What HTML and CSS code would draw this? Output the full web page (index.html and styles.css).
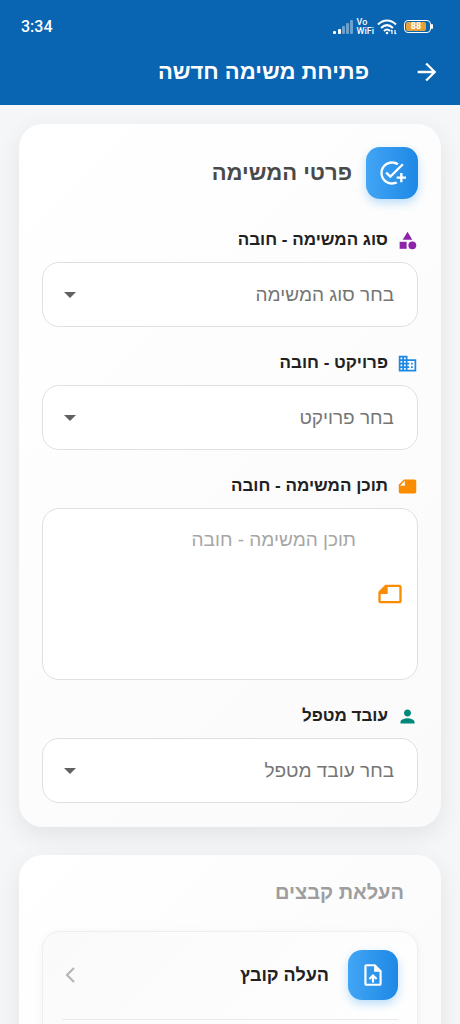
FILE: index.html
```html
<!DOCTYPE html>
<html lang="he" dir="rtl">
<head>
<meta charset="utf-8">
<meta name="viewport" content="width=device-width, initial-scale=1">
<title>פתיחת משימה חדשה</title>
<link rel="stylesheet" href="styles.css">
</head>
<body>
<div class="screen">
  <header class="header">
    <div class="status" dir="ltr">
      <span class="clock">3:34</span>
      <div class="status-icons">
        <svg width="21" height="14" viewBox="0 0 21 14" fill="#fff" aria-hidden="true">
          <rect x="0" y="11" width="3" height="3" rx="1"/>
          <rect x="5" y="9" width="3" height="5" rx="1"/>
          <g opacity=".4"><rect x="9" y="6" width="3" height="8" rx="1"/><rect x="13" y="3" width="3" height="11" rx="1"/><rect x="17" y="0" width="3" height="14" rx="1"/></g>
        </svg>
        <span class="vowifi"><span>Vo</span><span>WiFi</span></span>
        <svg width="21" height="16" viewBox="0 0 21 16" fill="none" stroke="#fff" stroke-width="2" aria-hidden="true">
          <path d="M1 5.500C6.500.200 13.500.200 19 5.500M4 9C7.800 5.300 12.200 5.300 16 9M7 12C9 10 11 10 13 12"/>
          <circle cx="10" cy="14" r="1.300" fill="#fff" stroke="none"/>
          <path d="M15 11v4M13.800 12.200L15 11M18 11v4M19.200 13.800L18 15" stroke-width="1.200"/>
        </svg>
        <span class="battery"><span class="battery-level">88</span></span>
      </div>
    </div>
    <div class="appbar">
      <button class="back" type="button" aria-label="חזרה">
        <svg width="28" height="28" viewBox="0 0 24 24" fill="#fff"><path d="M12 4l-1.410 1.410L16.170 11H4v2h12.170l-5.580 5.590L12 20l8-8z"/></svg>
      </button>
      <h1 class="title">פתיחת משימה חדשה</h1>
    </div>
  </header>

  <main class="content">
    <form class="card">
      <div class="card-head">
        <span class="tile tile-large">
          <svg width="28" height="28" viewBox="0 0 24 24" fill="#fff" aria-hidden="true"><path d="M22 5.180L10.590 16.600l-4.240-4.240 1.410-1.410 2.830 2.830 10-10L22 5.180zM12 20c-4.410 0-8-3.590-8-8s3.590-8 8-8c1.570 0 3.040.460 4.280 1.250l1.450-1.450C16.100 2.670 14.130 2 12 2 6.480 2 2 6.480 2 12s4.480 10 10 10c1.730 0 3.360-.440 4.780-1.220l-1.500-1.500c-1 .460-2.110.720-3.280.720zm7-5h-3v2h3v3h2v-3h3v-2h-3v-3h-2v3z"/></svg>
        </span>
        <h2 class="card-title">פרטי המשימה</h2>
      </div>

      <div class="field">
        <label class="label" for="type">
          <svg width="21" height="21" viewBox="0 0 24 24" fill="#8e24aa" aria-hidden="true"><path d="M12 2l-5.500 9h11z"/><circle cx="17.500" cy="17.500" r="4.500"/><path d="M3 13.500h8v8H3z"/></svg>
          סוג המשימה - חובה
        </label>
        <div class="control">
          <select class="select" id="type"><option>בחר סוג המשימה</option></select>
          <svg class="caret" width="12" height="6" viewBox="0 0 12 6" aria-hidden="true"><path d="M0 0h12L6 6z"/></svg>
        </div>
      </div>

      <div class="field">
        <label class="label" for="project">
          <svg width="21" height="21" viewBox="0 0 24 24" fill="#1e88e5" aria-hidden="true"><path d="M12 7V3H2v18h20V7H12zM6 19H4v-2h2v2zm0-4H4v-2h2v2zm0-4H4V9h2v2zm0-4H4V5h2v2zm4 12H8v-2h2v2zm0-4H8v-2h2v2zm0-4H8V9h2v2zm0-4H8V5h2v2zm10 12h-8v-2h2v-2h-2v-2h2v-2h-2V9h8v10zm-2-8h-2v2h2v-2zm0 4h-2v2h2v-2z"/></svg>
          פרויקט - חובה
        </label>
        <div class="control">
          <select class="select" id="project"><option>בחר פרויקט</option></select>
          <svg class="caret" width="12" height="6" viewBox="0 0 12 6" aria-hidden="true"><path d="M0 0h12L6 6z"/></svg>
        </div>
      </div>

      <div class="field">
        <label class="label" for="body">
          <svg width="21" height="21" viewBox="0 0 24 24" fill="#fb8c00" aria-hidden="true"><path fill-rule="evenodd" d="M8 4h12c1.100 0 2 .900 2 2v12c0 1.100-.900 2-2 2H4c-1.100 0-2-.900-2-2v-8zM9 5.500L3.500 11H9z"/></svg>
          תוכן המשימה - חובה
        </label>
        <div class="control">
          <textarea class="textarea" id="body" placeholder="תוכן המשימה - חובה"></textarea>
          <svg class="note" width="28" height="28" viewBox="0 0 24 24" fill="#fb8c00" aria-hidden="true"><path fill-rule="evenodd" d="M8 4h12c1.100 0 2 .900 2 2v12c0 1.100-.900 2-2 2H4c-1.100 0-2-.900-2-2v-8zM10 6v6H4v6h16V6z"/></svg>
        </div>
      </div>

      <div class="field">
        <label class="label" for="worker">
          <svg width="21" height="21" viewBox="0 0 24 24" fill="#00897b" aria-hidden="true"><path d="M12 12c2.210 0 4-1.790 4-4s-1.790-4-4-4-4 1.790-4 4 1.790 4 4 4zm0 2c-2.670 0-8 1.340-8 4v2h16v-2c0-2.660-5.330-4-8-4z"/></svg>
          עובד מטפל
        </label>
        <div class="control">
          <select class="select" id="worker"><option>בחר עובד מטפל</option></select>
          <svg class="caret" width="12" height="6" viewBox="0 0 12 6" aria-hidden="true"><path d="M0 0h12L6 6z"/></svg>
        </div>
      </div>
    </form>

    <section class="card">
      <h2 class="section-title">העלאת קבצים</h2>
      <div class="list">
        <button class="item" type="button">
          <span class="tile">
            <svg width="26" height="26" viewBox="0 0 24 24" fill="#fff" aria-hidden="true"><path fill-rule="evenodd" d="M14 2H6c-1.100 0-2 .900-2 2v16c0 1.100.890 2 1.990 2H18c1.100 0 2-.900 2-2V8l-6-6zm4 18H6V4h7v5h5v11zM8 15.010l1.410 1.410L11 14.840V19h2v-4.160l1.590 1.590L16 15.010 12.010 11z"/></svg>
          </span>
          <span class="item-text">העלה קובץ</span>
          <svg width="9" height="16" viewBox="0 0 9 16" fill="none" stroke="#b4b4b4" stroke-width="2" aria-hidden="true"><path d="M8 1L1 8l7 7"/></svg>
        </button>
      </div>
    </section>
  </main>
</div>
</body>
</html>
```
FILE: styles.css
```css
* {
  box-sizing: border-box;
}

body {
  margin: 0;
  font-family: "Liberation Sans", Arial, sans-serif;
  color: #212121;
  background: #f4f6f8;
}

h1,
h2 {
  margin: 0;
}

button,
select,
textarea {
  font: inherit;
}

svg {
  flex: none;
}

.screen {
  display: flex;
  flex-direction: column;
  height: 100vh;
  overflow: hidden;
}

.header {
  flex: none;
  color: #fff;
  background: #0964b2;
}

.status {
  display: flex;
  align-items: center;
  justify-content: space-between;
  height: 40px;
  padding: 13px 29px 0 21px;
}

.clock {
  font: 500 16px/20px Roboto, sans-serif;
}

.status-icons {
  display: flex;
  align-items: center;
  gap: 3px;
}

.vowifi {
  display: flex;
  flex-direction: column;
  font: 500 9px/9px Roboto, sans-serif;
}

.battery {
  position: relative;
  width: 27px;
  height: 13px;
  margin-left: 3px;
  padding: 1px;
  border: 1px solid #fff;
  border-radius: 4px;
}

.battery::after {
  content: "";
  position: absolute;
  top: 3px;
  right: -3px;
  width: 2px;
  height: 5px;
  border-radius: 1px;
  background: #fff;
}

.battery-level {
  display: block;
  width: 20px;
  border-radius: 2px;
  font: 700 9px/9px Roboto, sans-serif;
  text-align: center;
  background: #e3a33c;
}

.appbar {
  display: flex;
  align-items: center;
  gap: 44px;
  height: 65px;
  padding: 0 19px 2px;
}

.back {
  display: flex;
  padding: 0;
  border: 0;
  background: none;
}

.title {
  font-size: 22px;
  line-height: 32px;
  font-weight: 600;
}

.content {
  flex: 1;
  display: flex;
  flex-direction: column;
  gap: 28px;
  padding: 19px;
  overflow: hidden;
}

.card {
  flex: none;
  display: flex;
  flex-direction: column;
  gap: 24px;
  padding: 23px 23px 24px;
  border-radius: 24px;
  background: linear-gradient(135deg, #fff, #fafafa);
  box-shadow: 0 8px 24px rgba(0, 0, 0, 0.08);
}

.card-head {
  display: flex;
  align-items: center;
  gap: 14px;
  margin-bottom: 5px;
}

.tile {
  flex: none;
  display: flex;
  align-items: center;
  justify-content: center;
  width: 50px;
  height: 50px;
  border-radius: 14px;
  background: linear-gradient(to right, #42a5f5, #1e88e5);
  box-shadow: 0 4px 10px rgba(33, 150, 243, 0.3);
}

.tile-large {
  width: 52px;
  height: 52px;
}

.card-title {
  font-size: 22px;
  line-height: 32px;
  font-weight: 600;
  color: #4a4a4a;
}

.field {
  display: flex;
  flex-direction: column;
  gap: 10px;
}

.label {
  display: flex;
  align-items: center;
  gap: 9px;
  height: 24px;
  font-size: 17px;
  line-height: 24px;
  font-weight: 600;
}

.control {
  position: relative;
  display: flex;
}

.select,
.textarea {
  width: 100%;
  margin: 0;
  border: 1px solid #e0e0e0;
  border-radius: 17px;
  font-size: 19px;
  background: #fff;
}

.select {
  appearance: none;
  height: 65px;
  padding: 0 23px;
  color: #757575;
}

.caret {
  position: absolute;
  left: 22px;
  top: 50%;
  margin-top: -3px;
  fill: #616161;
}

.textarea {
  height: 172px;
  padding: 18px 61px 18px 20px;
  line-height: 26px;
  resize: none;
}

.textarea::placeholder {
  color: #a6a6a6;
}

.note {
  position: absolute;
  right: 14px;
  top: 50%;
  margin-top: -14px;
}

.section-title {
  padding: 0 14px;
  font-size: 20px;
  line-height: 29px;
  font-weight: 600;
  color: #9e9e9e;
}

.list {
  min-height: 160px;
  padding: 0 19px;
  border: 1px solid #eee;
  border-radius: 18px;
  background: linear-gradient(135deg, #fafafa, #fff);
  box-shadow: 0 2px 10px rgba(0, 0, 0, 0.05);
}

.item {
  display: flex;
  align-items: center;
  gap: 19px;
  width: 100%;
  padding: 18px 0 19px;
  border: 0;
  border-bottom: 1px solid #ebebeb;
  color: inherit;
  background: none;
}

.item > :last-child {
  margin-left: 4px;
}

.item-text {
  flex: 1;
  font-size: 18px;
  line-height: 26px;
  font-weight: 600;
  text-align: start;
}
```
